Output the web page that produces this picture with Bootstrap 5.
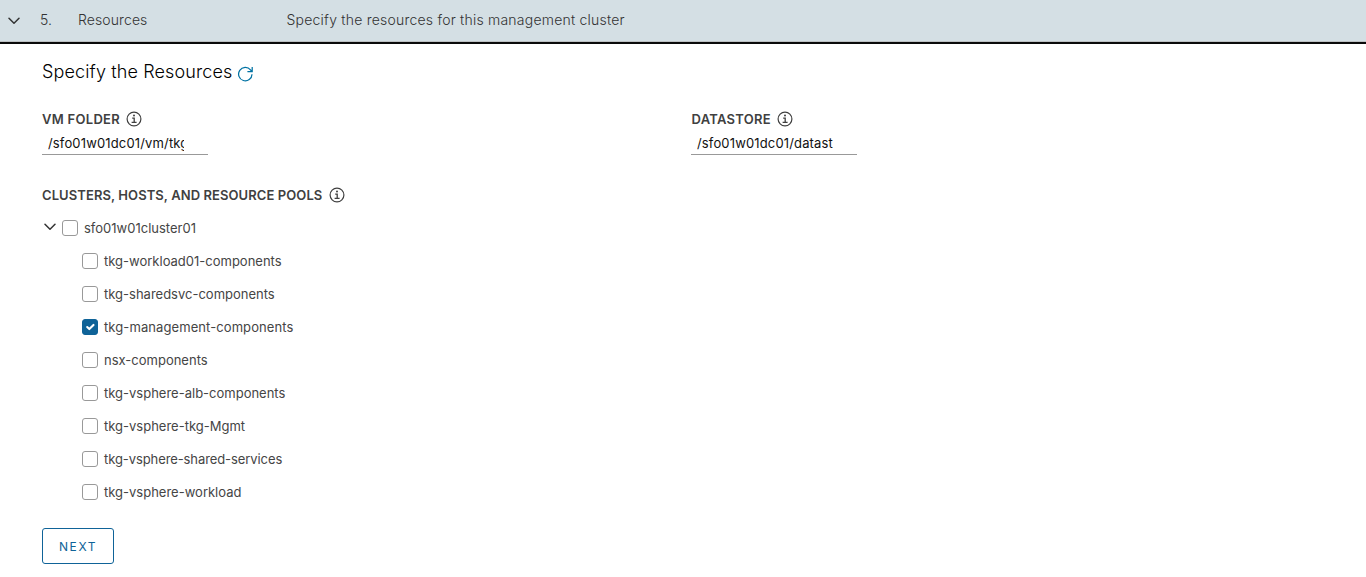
<!DOCTYPE html>
<html lang="en">
<head>
<meta charset="utf-8">
<meta name="viewport" content="width=device-width, initial-scale=1">
<title>Management cluster resources</title>
<link href="https://cdn.jsdelivr.net/npm/bootstrap@5.3.0/dist/css/bootstrap.min.css" rel="stylesheet">
<style>
  body { font: 400 13px/20px Inter, "Open Sans", sans-serif; color: #454545; background: #fff; }
  svg { display: block; flex: none; fill: none; stroke: currentColor; }
  .step-head { height: 44px; padding: 0 0 2px 8px; background: #d4dfe4; border-bottom: 2px solid #0a0a0a; box-shadow: inset 0 -1px #bcc0c2; font-size: 14px; font-weight: 300; color: #333; }
  .step-head svg { margin-top: 1px; }
  .step-no { width: 38px; margin-left: 20px; }
  .step-name { width: 208.5px; letter-spacing: .1px; }
  .step-desc { letter-spacing: .22px; }
  .step-body { padding: 16px 0 0 42px; }
  .step-title { font-size: 18px; font-weight: 300; line-height: 24px; color: #000; letter-spacing: .13px; margin: 0; }
  .refresh { color: #0072a3; margin: 6px 0 0 4px; }
  .fields { margin-top: 25px; }
  .field-col { width: 649px; }
  .field-label { height: 20px; gap: 6px; font-weight: 600; color: #404040; letter-spacing: .08px; }
  .short-label { letter-spacing: .28px; }
  .store-label { padding-left: .5px; gap: 6.5px; }
  .select-line { width: 166px; height: 24px; margin-top: 2px; padding: 0 24px 0 6px; border-bottom: 1px solid #999; letter-spacing: .15px; color: #111; }
  .select-text { height: 23px; line-height: 25px; overflow: hidden; white-space: nowrap; }
  .pools { margin-top: 30px; gap: 7px; }
  .tree { margin: 6px 0 0; }
  .tree-row { height: 33px; gap: 6px; }
  .root-row { padding-left: 2px; }
  .root-row svg { margin-top: -1px; color: #333; }
  .child-row { padding-left: 40px; }
  .tree-row .form-check-input { width: 16px; height: 16px; margin: 1px 0 0; flex: none; border: 1px solid #999; border-radius: 3px; }
  .tree-row .form-check-input:checked { background-color: #0f6398; border-color: #0f6398; }
  .wide { letter-spacing: .09px; }
  .tight { letter-spacing: -.09px; }
  .btn-next { width: 72px; height: 36px; margin-top: 20px; padding: 1px 0 0; border: 1px solid #0f6398; border-radius: 3px; color: #0f6398; font-size: 12px; letter-spacing: 1.6px; }
</style>
</head>
<body>
<svg width="0" height="0" class="position-absolute" aria-hidden="true">
  <symbol id="info" viewBox="0 0 16 16">
    <circle cx="8" cy="8" r="6.9" stroke-width="1.2"/>
    <path d="M6.2 7.2h2v4M5.6 11.4h5" stroke-width="1.3"/>
    <circle cx="8" cy="4.6" r="1" fill="currentColor" stroke="none"/>
  </symbol>
  <symbol id="chevron" viewBox="0 0 12 8">
    <path d="M1 1.3 6 6.3 11 1.3" stroke-width="1.5" stroke-linecap="round" stroke-linejoin="round"/>
  </symbol>
</svg>

<header class="step-head d-flex align-items-center">
  <svg width="12" height="8"><use href="#chevron"/></svg>
  <span class="step-no">5.</span>
  <span class="step-name">Resources</span>
  <span class="step-desc">Specify the resources for this management cluster</span>
</header>

<main class="step-body">
  <div class="d-flex">
    <h1 class="step-title">Specify the Resources</h1>
    <svg class="refresh" width="17" height="16" viewBox="0 0 17 16" stroke-width="1.25"><path d="M15 8.2a6.7 6.7 0 1 1-1.5-4.3l1.3 1.6M10.4 5.7h4.8V1"/></svg>
  </div>

  <div class="fields d-flex">
    <div class="field-col">
      <div class="field-label d-flex align-items-center"><span class="short-label">VM FOLDER</span><svg width="16" height="16"><use href="#info"/></svg></div>
      <div class="select-line"><div class="select-text">/sfo01w01dc01/vm/tkg</div></div>
    </div>
    <div>
      <div class="field-label store-label d-flex align-items-center"><span class="short-label">DATASTORE</span><svg width="16" height="16"><use href="#info"/></svg></div>
      <div class="select-line"><div class="select-text">/sfo01w01dc01/datast</div></div>
    </div>
  </div>

  <div class="field-label pools d-flex align-items-center">CLUSTERS, HOSTS, AND RESOURCE POOLS<svg width="16" height="16"><use href="#info"/></svg></div>

  <div class="tree">
    <label class="tree-row root-row d-flex align-items-center"><svg width="12" height="8"><use href="#chevron"/></svg><input class="form-check-input" type="checkbox">sfo01w01cluster01</label>
    <label class="tree-row child-row d-flex align-items-center"><input class="form-check-input" type="checkbox">tkg-workload01-components</label>
    <label class="tree-row child-row d-flex align-items-center"><input class="form-check-input" type="checkbox">tkg-sharedsvc-components</label>
    <label class="tree-row child-row d-flex align-items-center wide"><input class="form-check-input" type="checkbox" checked>tkg-management-components</label>
    <label class="tree-row child-row d-flex align-items-center"><input class="form-check-input" type="checkbox">nsx-components</label>
    <label class="tree-row child-row d-flex align-items-center"><input class="form-check-input" type="checkbox">tkg-vsphere-alb-components</label>
    <label class="tree-row child-row d-flex align-items-center"><input class="form-check-input" type="checkbox">tkg-vsphere-tkg-Mgmt</label>
    <label class="tree-row child-row d-flex align-items-center tight"><input class="form-check-input" type="checkbox">tkg-vsphere-shared-services</label>
    <label class="tree-row child-row d-flex align-items-center"><input class="form-check-input" type="checkbox">tkg-vsphere-workload</label>
  </div>

  <button type="button" class="btn btn-next">NEXT</button>
</main>
<script src="https://cdn.jsdelivr.net/npm/bootstrap@5.3.0/dist/js/bootstrap.bundle.min.js"></script>
</body>
</html>
